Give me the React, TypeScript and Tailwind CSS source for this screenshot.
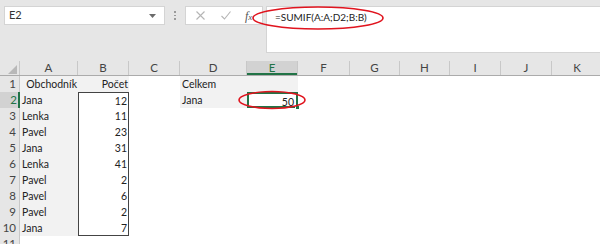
import React from "react";

const cols = [
  { l: "A", w: 58 },
  { l: "B", w: 51 },
  { l: "C", w: 51 },
  { l: "D", w: 67 },
  { l: "E", w: 51 },
  { l: "F", w: 52 },
  { l: "G", w: 50 },
  { l: "H", w: 50 },
  { l: "I", w: 51 },
  { l: "J", w: 51 },
  { l: "K", w: 51 },
];

const data: [string, string][] = [
  ["Obchodník", "Počet"],
  ["Jana", "12"],
  ["Lenka", "11"],
  ["Pavel", "23"],
  ["Jana", "31"],
  ["Lenka", "41"],
  ["Pavel", "2"],
  ["Pavel", "6"],
  ["Pavel", "2"],
  ["Jana", "7"],
  ["", ""],
];

function Cell({
  w,
  className = "",
  children,
}: {
  w: number;
  className?: string;
  children?: React.ReactNode;
}) {
  return (
    <div
      className={`box-border h-[16px] shrink-0 overflow-visible whitespace-nowrap leading-[16px] ${className}`}
      style={{ width: w }}
    >
      {children}
    </div>
  );
}

export default function App() {
  return (
    <div
      className="relative h-[244px] w-[600px] overflow-hidden bg-[#e6e6e6] text-[11px] text-[#222]"
      style={{ fontFamily: "Lato, 'Liberation Sans', sans-serif" }}
    >
      {/* toolbar */}
      <div className="flex h-[61px] items-start pt-[6px]">
        <div className="ml-[4px] flex h-[19px] w-[161px] items-center justify-between border border-[#d4d4d4] bg-white pl-[4px] pr-[8px] text-[11px] text-[#333]">
          <span>E2</span>
          <svg width="7" height="4" viewBox="0 0 7 4">
            <path d="M0 0 L7 0 L3.5 4 Z" fill="#6b6b6b" />
          </svg>
        </div>
        <div className="ml-[4px] flex h-[19px] w-[12px] flex-col items-center justify-center gap-[2px]">
          <div className="h-[1.5px] w-[1.5px] bg-[#9a9a9a]" />
          <div className="h-[1.5px] w-[1.5px] bg-[#9a9a9a]" />
          <div className="h-[1.5px] w-[1.5px] bg-[#9a9a9a]" />
        </div>
        <div className="ml-[4px] flex h-[19px] w-[78px] items-center border border-[#d4d4d4] bg-white">
          <svg className="ml-[10px]" width="9" height="9" viewBox="0 0 9 9">
            <path d="M0.5 0.5 L8.5 8.5 M8.5 0.5 L0.5 8.5" stroke="#b5b5b5" strokeWidth="1.1" />
          </svg>
          <svg className="ml-[16px]" width="10" height="9" viewBox="0 0 10 9">
            <path d="M0.5 5 L3.5 8 L9.5 0.5" stroke="#b5b5b5" strokeWidth="1.1" fill="none" />
          </svg>
          <span
            className="ml-[14px] text-[12px] italic text-[#555]"
            style={{ fontFamily: "'Liberation Serif', serif" }}
          >
            f<span className="text-[9px]">x</span>
          </span>
        </div>
        <div className="ml-[3px] h-[47px] flex-1 border-y border-l border-[#d4d4d4] bg-white pl-[8px] pt-[1px] text-[10px] leading-[18px] text-[#222]">
          =SUMIF(A:A;D2;B:B)
        </div>
      </div>

      {/* header row */}
      <div className="flex h-[15px] border-b border-[#ababab] text-[#444]">
        <div className="relative box-border h-[14px] w-[20px] shrink-0 border-r border-[#c8c8c8]">
          <svg className="absolute bottom-[1px] right-[2px]" width="9" height="9" viewBox="0 0 9 9">
            <path d="M9 0 L9 9 L0 9 Z" fill="#b8b8b8" />
          </svg>
        </div>
        {cols.map((c) => (
          <div
            key={c.l}
            className={`box-border flex h-[14px] shrink-0 items-center justify-center border-r border-[#c8c8c8] text-[11.5px] ${
              c.l === "E" ? "bg-[#d2d2d2] text-[#217346] shadow-[inset_0_-2px_0_#217346]" : ""
            }`}
            style={{ width: c.w }}
          >
            {c.l}
          </div>
        ))}
      </div>

      {/* rows */}
      <div className="flex flex-col bg-white text-[10.5px]">
        {data.map((r, i) => {
          const row = i + 1;
          const bBorder =
            row >= 2 && row <= 10
              ? `border-x border-[#444] ${row === 2 ? "border-t" : ""} ${row === 10 ? "border-b" : ""}`
              : "";
          return (
            <div key={row} className="flex h-[16px]">
              <Cell
                w={20}
                className={`pr-[3px] text-right text-[11.5px] text-[#444] ${
                  row === 2
                    ? "bg-[#d2d2d2] text-[#217346] shadow-[inset_-2px_0_0_#217346]"
                    : "bg-[#e6e6e6] border-r border-[#c8c8c8]"
                }`}
              >
                {row}
              </Cell>
              <Cell
                w={58}
                className={`pl-[2px] pr-[1px] ${row <= 10 ? "bg-[#f2f2f2]" : ""} ${
                  row === 1 ? "text-right" : "text-left"
                }`}
              >
                {r[0]}
              </Cell>
              <Cell
                w={51}
                className={`pr-[1px] text-right ${row === 1 ? "bg-[#f2f2f2]" : ""} ${bBorder}`}
              >
                {r[1]}
              </Cell>
              <Cell w={51} />
              <Cell
                w={67}
                className={`pl-[2px] ${row <= 2 ? "bg-[#f2f2f2]" : ""}`}
              >
                {row === 1 ? "Celkem" : row === 2 ? "Jana" : ""}
              </Cell>
              <Cell
                w={51}
                className={`relative pr-[2px] text-right ${
                  row === 1 ? "bg-[#f2f2f2]" : row === 2 ? "border-2 border-[#217346] leading-[12px]" : ""
                }`}
              >
                {row === 2 ? (
                  <>
                    50
                    <div className="absolute bottom-[-4px] right-[-4px] h-[5px] w-[5px] border border-white bg-[#217346]" />
                  </>
                ) : null}
              </Cell>
              {cols.slice(5).map((c) => (
                <Cell key={c.l} w={c.w} />
              ))}
            </div>
          );
        })}
      </div>

      {/* red annotation ellipses */}
      <svg className="pointer-events-none absolute left-0 top-0" width="600" height="244">
        <ellipse cx="318" cy="18" rx="65" ry="11" fill="none" stroke="#e0141e" strokeWidth="1.6" />
        <ellipse cx="272" cy="100" rx="33" ry="8.5" fill="none" stroke="#e0141e" strokeWidth="1.6" />
      </svg>
    </div>
  );
}
